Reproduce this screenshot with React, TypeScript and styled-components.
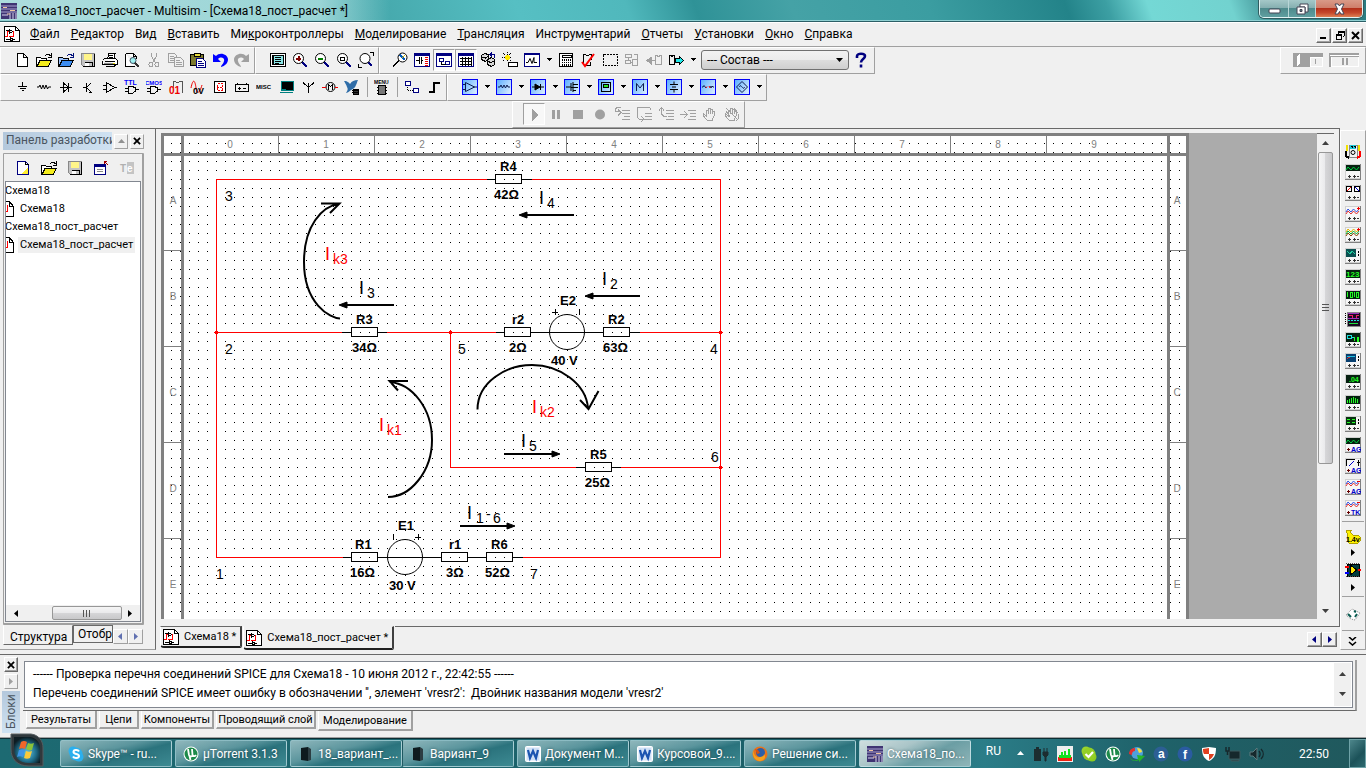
import React from "react";
import styled, { createGlobalStyle, css } from "styled-components";

const Global = createGlobalStyle`
  *, *::before, *::after { box-sizing: border-box; }
  body { margin: 0; background: #f0f0f0; }
  #root { font-family: Roboto, "Open Sans", sans-serif; font-size: 12px; line-height: 16px; color: #000; }
  button, select { font: inherit; color: inherit; margin: 0; padding: 0; border: 0; background: none; }
  p, h1, h2, ul { margin: 0; padding: 0; font-size: inherit; font-weight: 400; list-style: none; }
  svg { display: block; flex: none; }
`;

const FACE = "#f0f0f0";
const LIGHT = "#ffffff";
const SHADOW = "#a0a0a0";
const DARK = "#696969";

const Screen = styled.div`
  display: flex;
  flex-direction: column;
  height: 100vh;
  background: ${FACE};
  overflow: hidden;
  white-space: nowrap;
`;

/* ---------- title bar ---------- */

const TitleBar = styled.header`
  display: flex;
  align-items: flex-start;
  flex: none;
  height: 23px;
  border-bottom: 1px solid #fff;
  box-shadow: inset 0 -1px 0 #2c5f66, inset 0 -2px 0 #8fd0d2;
  background:
    linear-gradient(90deg, rgba(200, 236, 236, 0.8) 0, rgba(190, 232, 232, 0.7) 320px, rgba(150, 215, 217, 0) 390px),
    linear-gradient(70deg, #3f9fa3 0%, #46a9ad 28%, #56bfc3 38%, #50b8bc 46%, #2f9297 51%, #45a2a6 58%, #3b9da1 68%, #238389 78%, #3c9fa3 81%, #74d8d5 84%, #72d2cf 90%, #3f8f93 93%, #2a7b80 100%);
`;

const TitleText = styled.h1`
  flex: 1;
  padding: 3px 0 0 4px;
`;

const TitleIcon = styled.span`
  padding: 3px 0 0 1px;
`;

const Caption = styled.div`
  display: flex;
  height: 18px;
  margin-right: 3px;
  border: 1px solid #e1f4f4;
  border-top: 0;
  border-radius: 0 0 5px 5px;
  overflow: hidden;
  box-shadow: 0 0 0 1px #315c60;
`;

const CaptionButton = styled.button<{ $w: number; $close?: boolean }>`
  display: grid;
  place-items: center;
  width: ${(p) => p.$w}px;
  border-right: 1px solid #b8d6d7;
  background: ${(p) =>
    p.$close
      ? "linear-gradient(#d99a88 0, #cf7f6b 45%, #b3301a 50%, #c5482b 75%, #dc8053 100%)"
      : "linear-gradient(#a5c8c8 0, #86b0b1 45%, #4e8a8c 50%, #5f9fa0 100%)"};
  &:last-child { border-right: 0; }
`;

/* ---------- menu ---------- */

const MenuBar = styled.nav`
  display: flex;
  align-items: center;
  flex: none;
  height: 24px;
  padding: 0 0 2px 4px;
  border-bottom: 1px solid ${SHADOW};
`;

const MenuItem = styled.button`
  height: 20px;
  padding: 0 6px 0 5px;
  &:first-of-type { margin-left: 4px; }
`;

const MdiButtons = styled.div`
  display: flex;
  gap: 1px;
  margin: 4px 3px 0 auto;
`;

const SmallButton = styled.button<{ $w?: number; $flat?: boolean }>`
  display: grid;
  place-items: center;
  width: ${(p) => p.$w ?? 15}px;
  height: 15px;
  background: ${FACE};
  border: 1px solid ${LIGHT};
  border-right-color: ${(p) => (p.$flat ? SHADOW : DARK)};
  border-bottom-color: ${(p) => (p.$flat ? SHADOW : DARK)};
  box-shadow: inset -1px -1px 0 ${(p) => (p.$flat ? FACE : SHADOW)};
`;

/* ---------- tool bars ---------- */

const BarRow = styled.div`
  display: flex;
  flex: none;
  height: 27px;
`;

const Band = styled.div<{ $left?: number; $right?: number }>`
  display: flex;
  align-items: center;
  height: 27px;
  padding: 0 ${(p) => p.$right ?? 1}px 2px ${(p) => p.$left ?? 10}px;
  border: 1px solid ${LIGHT};
  border-right-color: ${SHADOW};
  border-bottom-color: ${SHADOW};
`;

const Tool = styled.button<{ $pressed?: boolean }>`
  display: grid;
  place-items: center;
  width: 22px;
  height: 22px;
  ${(p) =>
    p.$pressed &&
    css`
      border: 1px solid ${SHADOW};
      border-right-color: ${LIGHT};
      border-bottom-color: ${LIGHT};
      background: #f8f8f8;
    `}
`;

const DropTool = styled.button`
  display: grid;
  place-items: center;
  width: 12px;
  height: 22px;
`;

const BarLine = styled.span`
  width: 1px;
  height: 20px;
  margin: 0 3px 0 4px;
  background: ${SHADOW};
`;

const PickerWrap = styled.label`
  position: relative;
  margin: 0 1px 0 2px;
`;

const Picker = styled.select`
  appearance: none;
  display: block;
  width: 148px;
  height: 20px;
  padding: 0 20px 0 5px;
  border: 1px solid #707070;
  border-radius: 3px;
  background: linear-gradient(#f2f2f2, #ebebeb 50%, #dddddd 50%, #cfcfcf);
`;

const PickerArrow = styled.span`
  position: absolute;
  right: 5px;
  top: 6px;
  pointer-events: none;
`;

const Push = styled.div`
  margin-left: auto;
`;

const SimRow = styled(BarRow)`
  padding-left: 512px;
`;

const SwitchButton = styled.button`
  width: 30px;
  margin-right: 6px;
`;

/* ---------- workspace ---------- */

const Workspace = styled.main`
  display: flex;
  flex: 1;
  min-height: 0;
`;

const LeftDock = styled.aside`
  display: flex;
  flex-direction: column;
  flex: none;
  width: 156px;
  padding: 3px 11px 4px 3px;
  border-top: 1px solid ${DARK};
  border-right: 1px solid ${DARK};
  border-bottom: 1px solid ${SHADOW};
`;

const DockHead = styled.div`
  display: flex;
  align-items: center;
  gap: 2px;
  height: 18px;
  margin-bottom: 3px;
`;

const DockTitle = styled.h2`
  flex: 1;
  height: 18px;
  padding-left: 3px;
  overflow: hidden;
  color: #4a5560;
  background: linear-gradient(90deg, #b4c8dc, #cfe2f2);
`;

const DockFrame = styled.section`
  display: flex;
  flex-direction: column;
  flex: 1;
  min-height: 0;
  padding: 1px;
  border: 1px solid ${SHADOW};
  border-right: 2px solid ${SHADOW};
  border-bottom: 2px solid ${SHADOW};
  border-radius: 1px;
`;

const DockTools = styled.div`
  display: flex;
  flex: none;
  height: 26px;
  padding-left: 5px;
`;

const DockTool = styled(Tool)`
  width: 26px;
  height: 26px;
`;

const TreeBox = styled.div`
  display: flex;
  flex-direction: column;
  flex: 1;
  min-height: 0;
  border: 1px solid #828790;
  background: #fff;
`;

const Tree = styled.ul`
  flex: 1;
  overflow: hidden;
  font-size: 11px;
`;

const TreeItem = styled.li<{ $leaf?: boolean; $on?: boolean }>`
  display: flex;
  align-items: center;
  height: 18px;
  margin-left: ${(p) => (p.$leaf ? 0 : -3)}px;
  span { padding: 0 2px; margin-left: ${(p) => (p.$leaf ? 3 : 0)}px; background: ${(p) => (p.$on ? "#f0f0f0" : "none")}; }
`;

const HScroll = styled.div`
  display: flex;
  align-items: center;
  justify-content: space-between;
  flex: none;
  height: 16px;
  padding: 0 6px;
  background: #f0f0f0;
`;

const HThumb = styled.span`
  display: grid;
  place-items: center;
  width: 70px;
  height: 14px;
  margin-left: 28px;
  border: 1px solid #979797;
  border-radius: 2px;
  background: linear-gradient(#f5f5f5, #e9e9eb 50%, #d6d6d8 50%, #c8c8ca);
`;

const DockTabs = styled.div`
  display: flex;
  align-items: flex-start;
  flex: none;
  height: 20px;
`;

const DockTab = styled.button<{ $on?: boolean; $w: number }>`
  width: ${(p) => p.$w}px;
  height: ${(p) => (p.$on ? 20 : 18)}px;
  overflow: hidden;
  text-align: left;
  padding: ${(p) => (p.$on ? "3px 0 0 6px" : "0 0 0 4px")};
  border: 1px solid ${DARK};
  border-left-color: ${(p) => (p.$on ? LIGHT : DARK)};
  border-top-color: ${(p) => (p.$on ? FACE : DARK)};
`;

const DockNav = styled.div`
  display: flex;
  padding-top: 4px;
`;

const Mdi = styled.section`
  display: flex;
  flex-direction: column;
  flex: 1;
  min-width: 0;
`;

const MdiFrame = styled.div`
  display: flex;
  flex: 1;
  min-height: 0;
  padding: 4px 5px 7px 5px;
  border-top: 1px solid ${DARK};
  border-right: 1px solid ${DARK};
`;

const Sheet = styled.div`
  flex: 1;
  min-width: 0;
  overflow: hidden;
  background: #ababab;
`;

const VScroll = styled.div`
  display: flex;
  flex-direction: column;
  align-items: center;
  width: 17px;
  padding: 5px 1px 3px 1px;
  border-top: 1px solid ${DARK};
  background: #f0f0f0;
`;

const VThumb = styled.span`
  display: grid;
  place-items: center;
  width: 15px;
  flex: 311;
  margin-top: 4px;
  border: 1px solid #979797;
  border-radius: 2px;
  background: linear-gradient(90deg, #f5f5f5, #e9e9eb 50%, #d6d6d8 50%, #c8c8ca);
`;

const VTrack = styled.span`
  flex: 144;
`;

const SheetTabs = styled.div`
  display: flex;
  align-items: flex-start;
  flex: none;
  height: 24px;
  padding-left: 4px;
  font-size: 11px;
`;

const SheetTab = styled.button<{ $on?: boolean }>`
  display: flex;
  align-items: center;
  gap: 4px;
  height: ${(p) => (p.$on ? 24 : 22)}px;
  padding: 0 4px 0 2px;
  margin-right: 1px;
  border-right: 2px solid #404040;
  border-bottom: 2px solid #202020;
  border-left: 1px solid #fff;
  border-top: 1px solid ${(p) => (p.$on ? FACE : DARK)};
  border-radius: 0 0 2px 4px;
`;

const SheetNav = styled.div`
  display: flex;
  flex: 1;
  justify-content: flex-end;
  height: 24px;
  padding: 5px 3px 0 0;
  border-top: 1px solid ${DARK};
`;

const Instruments = styled.aside`
  display: flex;
  flex-direction: column;
  align-items: center;
  flex: none;
  width: 26px;
  margin-top: 2px;
  padding: 10px 1px 0 0;
  border: 1px solid ${LIGHT};
  border-right-color: ${SHADOW};
  border-bottom-color: ${SHADOW};
`;

const Instrument = styled.button<{ $h?: number }>`
  display: grid;
  place-items: center;
  width: 22px;
  height: ${(p) => p.$h ?? 21}px;
`;

const InstLine = styled.span`
  width: 22px;
  height: 1px;
  margin: 3px 0 4px;
  background: ${SHADOW};
`;

/* ---------- message spreadsheet ---------- */

const Output = styled.section`
  display: flex;
  flex: none;
  height: 84px;
  margin-top: 4px;
  border-top: 1px solid ${DARK};
  border-bottom: 1px solid ${SHADOW};
`;

const OutSide = styled.div`
  display: flex;
  flex-direction: column;
  align-items: center;
  gap: 2px;
  width: 23px;
  padding: 2px 2px 0 0;
`;

const SideLabel = styled.h2`
  width: 18px;
  height: 42px;
  writing-mode: vertical-rl;
  transform: rotate(180deg);
  text-align: center;
  line-height: 18px;
  color: #4a5560;
  background: linear-gradient(#cfe2f2, #b4c8dc);
`;

const OutBody = styled.div`
  flex: 1;
  min-width: 0;
  padding: 5px 9px 0 0;
`;

const OutFrame = styled.div`
  padding: 1px 2px 2px 1px;
  border-right: 2px solid ${SHADOW};
  border-bottom: 1px solid ${DARK};
`;

const OutText = styled.div`
  display: flex;
  height: 47px;
  border: 1px solid #828790;
  background: #fff;
`;

const Lines = styled.div`
  flex: 1;
  padding: 3px 0 0 8px;
  line-height: 19px;
  white-space: pre;
`;

const OutScroll = styled.div`
  display: flex;
  flex-direction: column;
  justify-content: space-between;
  align-items: center;
  width: 17px;
  margin: 1px;
  padding: 7px 0;
  background: #f0f0f0;
`;

const OutTabs = styled.div`
  display: flex;
  align-items: flex-start;
  gap: 2px;
  padding-left: 3px;
  font-size: 11px;
`;

const OutTab = styled.button<{ $on?: boolean; $w: number }>`
  width: ${(p) => p.$w}px;
  height: ${(p) => (p.$on ? 20 : 18)}px;
  overflow: hidden;
  border-right: 2px solid ${SHADOW};
  border-bottom: 2px solid ${SHADOW};
  border-left: 1px solid ${LIGHT};
  padding-top: 1px;
`;

/* ---------- task bar ---------- */

const TaskBar = styled.footer`
  display: flex;
  flex: none;
  align-items: stretch;
  height: 30px;
  padding-left: 9px;
  border-top: 1px solid #0c2d33;
  color: #fff;
  background: linear-gradient(90deg, #1d6a72 0, #1c5f68 60%, #2b7d88 72%, #1f626a 84%, #20585c 100%);
`;

const StartButton = styled.button`
  align-self: flex-end;
  width: 36px;
  height: 35px;
  margin-right: 15px;
`;

const TaskGroup = styled.div`
  display: flex;
  margin: 1px 3px 1px 0;
`;

const Task = styled.button<{ $on?: boolean }>`
  display: flex;
  align-items: center;
  gap: 4px;
  width: 112px;
  padding-left: 7px;
  text-align: left;
  border: 1px solid rgba(190, 225, 230, 0.65);
  border-radius: 2px;
  text-shadow: 0 0 3px rgba(0, 30, 40, 0.6);
  background: ${(p) =>
    p.$on
      ? "linear-gradient(155deg, #cfdedf 0, #aac5c8 35%, #6b9ea4 60%, #8fb5b8 100%)"
      : "linear-gradient(165deg, #8fb7bc 0, #5b959d 40%, #2b737d 58%, #3d8a92 100%)"};
  & + & { border-left-color: rgba(10, 50, 60, 0.5); }
`;

const Tray = styled.div`
  display: flex;
  align-items: center;
  gap: 8px;
  margin-left: auto;
`;

const Lang = styled.span`
  padding-bottom: 5px;
  margin-right: 7px;
`;

const Clock = styled.time`
  width: 76px;
  padding-left: 26px;
`;

const ShowDesktop = styled.button`
  width: 17px;
  border: 1px solid #6fa3a8;
  background: linear-gradient(135deg, #4d868b, #1c5259 60%, #2d6a70);
`;

/* ---------- icon drawings ---------- */

const Pix = ({ children, w = 16, h = 16, smooth }: { children: React.ReactNode; w?: number; h?: number; smooth?: boolean }) => (
  <svg
    width={w}
    height={h}
    viewBox={`0 0 ${w} ${h}`}
    fill="none"
    stroke="#000"
    shapeRendering={smooth ? "auto" : "crispEdges"}
    aria-hidden="true"
  >
    {children}
  </svg>
);

const Tri = ({ dir = "down", color = "#000" }: { dir?: "down" | "up" | "left" | "right"; color?: string }) => {
  const d = { down: "M1 2h7L4.500 6z", up: "M1 6h7L4.500 2z", left: "M6 1v7L2 4.500z", right: "M3 1v7L7 4.500z" }[dir];
  return (
    <svg width="9" height="9" viewBox="0 0 9 9" aria-hidden="true">
      <path d={d} fill={color} />
    </svg>
  );
};

const SmallDrop = () => (
  <svg width="5" height="3" viewBox="0 0 5 3" shapeRendering="crispEdges" aria-hidden="true">
    <path d="M0 0h5v1H4v1H3v1H2V2H1V1H0z" fill="#000" />
  </svg>
);

const glyph = { fontFamily: "Liberation Sans, sans-serif", fontWeight: 700, stroke: "none" } as const;

const Lens = ({ inner }: { inner?: React.ReactNode }) => (
  <>
    <path d="M10 10l5 5" stroke="#000080" strokeWidth="2" />
    <circle cx="6.500" cy="6.500" r="5" fill="#fff" shapeRendering="auto" />
    {inner}
  </>
);

const FolderOpen = ({ a, b, arrow = "#000" }: { a: string; b: string; arrow?: string }) => (
  <>
    <path d="M.5 14V5.500h4l1 1h5v2.500" fill={a} />
    <path d="M1 14.500L4 8.500h11.500L12 14.500z" fill={b} />
    <path d="M8.500 4.500l2-2h3l1 2M15.500 1v4h-4" stroke={arrow} />
  </>
);

const DocSchem = () => (
  <Pix w={17}>
    <path d="M.5 .5h11l4 4v11H.5z" fill="#fff" />
    <path d="M11.500 .5v4h4" />
    <path d="M1 10.500h2.500V5.500h2M8 5.500h1.500v5M5 10.500h5" stroke="#f00" />
    <path d="M5.500 3.500v4l3-2zM2 4.500h3M2 13.500h4M6.500 12v3l3-1.500z" fill="#fff" />
  </Pix>
);

const LeafDoc = () => (
  <Pix w={9}>
    <path d="M0 .5h3.500l4 5v10H0" fill="#fff" />
    <path d="M3.500 .5v5h4" />
    <path d="M1.500 4v7M0 10.500h1" stroke="#f00" />
  </Pix>
);

const NiMark = () => (
  <svg width="16" height="16" viewBox="0 0 16 16" aria-hidden="true">
    <rect width="16" height="16" fill="#3f3472" />
    <path d="M0 3h16M0 6h16M0 9h16" stroke="#a9a1cf" />
    <path d="M1 12h6M9 10v6M12 10v6M15 10v6" stroke="#d9d4ee" />
    <path d="M2 4.500h4M9 7.500h5M6 11h3" stroke="#f0c6a0" />
  </svg>
);

const icons: Record<string, React.ReactNode> = {
  new: <path d="M3.500 1.500h6l4 4v9h-10zM9.500 1.500v4h4" fill="#fff" />,
  open: <FolderOpen a="#fff" b="#f4ec1c" />,
  openBlue: <FolderOpen a="#9ec4ff" b="#3c8cf0" arrow="#00107a" />,
  save: (
    <>
      <path d="M1.500 1.500h13v13h-11l-2-2z" fill="#c4c4c4" stroke="#888" />
      <path d="M4 2h8v6H4z" fill="#fff58a" stroke="none" />
      <path d="M14.500 2v12.500H3M5 14v-4h7v4" />
      <path d="M5 11h4v3H5z" fill="#fff" stroke="none" />
    </>
  ),
  print: (
    <>
      <path d="M5.500 6.500l1.500-5h6l-1 5M2.500 6.500h11l2 2v4h-3M.5 8.500v4h2M.5 8.500l2-2" fill="#fff" />
      <path d="M3 12.500h10M3 9.500h10M3.500 14.500h9l1-2M7 3.500h4M6.500 5h4" />
      <path d="M2 11h9" stroke="#888" />
      <path d="M11 11h2" stroke="#e8d800" />
    </>
  ),
  preview: (
    <>
      <path d="M1.500 1.500h8l3 3v2M1.500 1.500v13h9M9.500 1.500v3h3" fill="#fff" />
      <circle cx="9" cy="8.500" r="3" fill="#9ff1f1" stroke="#456" shapeRendering="auto" />
      <path d="M11 11l4 4" stroke="#333" strokeWidth="2" />
    </>
  ),
  cut: (
    <g stroke="#a0a0a0">
      <path d="M5.500 1v3l4 7M10.500 1v3l-4 7" />
      <circle cx="5" cy="12.500" r="2" />
      <circle cx="11" cy="12.500" r="2" />
    </g>
  ),
  copy: (
    <g stroke="#a0a0a0">
      <path d="M.5 1.500h6l2 2v7h-8zM2 4.500h4M2 6.500h4M2 8.500h4" />
      <path d="M6.500 5.500h6l3 3v6h-9zM8 8.500h4M8 10.500h6M8 12.500h6" fill={FACE} />
    </g>
  ),
  paste: (
    <>
      <path d="M.5 2.500h13v11H.5z" fill="#7d7a2e" />
      <path d="M4 1h6v3H4z" fill="#e8dc3c" />
      <path d="M6.500 6.500h6l3 3v6h-9z" fill="#fff" stroke="#000080" />
      <path d="M8 9.500h4M8 11.500h6M8 13.500h6" stroke="#000080" />
    </>
  ),
  undo: (
    <path d="M1 2v8h8l-3-3c3-3 7-1 6 2c-.5 3-3 4-3 6c4-1 7-4 7-7.500c0-5-8-8-12-3.500z" fill="#0000ff" stroke="none" shapeRendering="auto" />
  ),
  redo: (
    <path d="M15 2v8H7l3-3c-3-3-7-1-6 2c.5 3 3 4 3 6c-4-1-7-4-7-7.500c0-5 8-8 12-3.500z" fill="#a0a0a0" stroke="none" shapeRendering="auto" />
  ),
  sheet: (
    <>
      <path d="M.5 1.500h15v13H.5z" fill="#fff" />
      <path d="M3.500 3.500h10v9h-10z" fill="#8be5e5" />
      <path d="M5 5.500h6M5 7.500h6M5 9.500h6M5 11.500h4M2 3v10" />
    </>
  ),
  zoomIn: <Lens inner={<path d="M4 6.500h5M6.500 4v5" stroke="#800000" strokeWidth="2" />} />,
  zoomOut: <Lens inner={<path d="M4 6.500h5" stroke="#008000" strokeWidth="2" />} />,
  zoomArea: <Lens inner={<path d="M4.500 5h4v3.500h-4z" />} />,
  zoomFit: (
    <>
      <path d="M10 10l3.500 4" stroke="#000080" strokeWidth="2" />
      <circle cx="7" cy="6.500" r="5" fill="#fff" shapeRendering="auto" />
      <path d="M12 .5h3.500V4M.5 12v3.500H4" />
    </>
  ),
  find: (
    <>
      <path d="M1 14.500l6-6" strokeWidth="2" />
      <circle cx="10.500" cy="5.500" r="4.500" fill="#fff" shapeRendering="auto" />
      <path d="M8 3l5 5" stroke="#0057b8" strokeWidth="2" />
      <path d="M10 6l3-3" stroke="#e0c000" />
    </>
  ),
  panel: (
    <>
      <path d="M.5 1.500h15v13H.5z" fill="#fff" stroke="#000080" />
      <path d="M1 3h14" stroke="#000080" strokeWidth="2" />
      <path d="M2 8.500h3M7 8.500h2M5.500 5v7M7.500 5v7" />
      <path d="M12 5v9" stroke="#e00" strokeWidth="3" strokeDasharray="1 1" />
    </>
  ),
  tree: (
    <>
      <path d="M.5 1.500h15v13H.5z" fill="#fff" stroke="#000080" />
      <path d="M1 3h15" stroke="#000080" strokeWidth="2" />
      <path d="M3.500 6.500h4v3h-4zM9.500 9.500h4v3h-4z" stroke="#000080" />
      <path d="M5.500 10v2.500h4" />
    </>
  ),
  grid: (
    <>
      <path d="M.5 1.500h15v13H.5z" fill="#fff" stroke="#000080" />
      <path d="M1 3h15" stroke="#000080" strokeWidth="2" />
      <path d="M2 6.500h12M2 9.500h12M2 12.500h12M4.500 5v9M7.500 5v9M10.500 5v9M13.500 5v9" />
    </>
  ),
  db: (
    <>
      <path d="M1.500 3.500l3-2 4 1v5l-3 2-4-2zM7.500 7.500l4-2 3 2v5l-3 2-4-2zM1.500 5l4 1 3-2" fill="#d8d8d8" />
      <path d="M7.500 9.500l4 1 3-2" />
      <path d="M10.500 2.500h4v3M12 .5l-2 2 2 2" stroke="#000080" />
    </>
  ),
  wizard: (
    <>
      <path d="M1 1l8 8M9 1L1 9M5.500 0v10M0 5.500h10" stroke="#000" strokeDasharray="1 1" />
      <path d="M3 5.500h5M5.500 3v5" stroke="#ffe800" strokeWidth="3" />
      <path d="M6.500 10.500h9v4h-9z" fill="#fff" />
    </>
  ),
  graph: (
    <>
      <path d="M.5 1.500h15v13H.5z" fill="#fff" stroke="#000080" />
      <path d="M1 2.500h14" stroke="#000080" />
      <path d="M2 10.500h2l2-4 2 5 2-6v5h3" shapeRendering="auto" />
    </>
  ),
  calc: (
    <>
      <path d="M1.500 1.500h13v13h-13zM4 3.500h9v2H4z" fill="#fff" />
      <path d="M4 8h9M4 10.500h9M4 13h9" strokeWidth="1.500" strokeDasharray="1 1" />
    </>
  ),
  check: (
    <>
      <path d="M3.500 11V2.500h2l1 1h2l1-1h2V8M5 13.500h5.500V10" />
      <path d="M2 10l3 4L14 2" stroke="#f00" strokeWidth="2" shapeRendering="auto" />
    </>
  ),
  marquee: <path d="M1.500 2.500h14v11h-14z" strokeDasharray="2 1" />,
  linkGray: (
    <g stroke="#a0a0a0">
      <path d="M1.500 2.500h6v3h-6zM1.500 8.500h5v3h-5zM9.500 2.500h4v4M8.500 7.500h5v6h-5zM4 6v2M7 10h1" />
    </g>
  ),
  backGray: (
    <g stroke="#a0a0a0">
      <path d="M1 8.500l4-3v6zM5 8.500h4" fill="#a0a0a0" />
      <path d="M9.500 12.500V3.500h2l.5 1h1l.5-1h2v9z" />
    </g>
  ),
  forward: (
    <>
      <path d="M1.500 12.500V3.500h2v1h1v-1h2v9zM7 8.500h2" />
      <path d="M7.500 6.500h4v-2l4 4-4 4v-2h-4z" fill="#20e8e8" />
    </>
  ),
  ground: <path d="M8.500 3v4M4 7.500h9M5.500 9.500h6M7.500 11.500h2" />,
  resistor: <path d="M1 8h2l1-2 1.500 4 1.500-4 1.500 4L10 6l1.500 4 1-2H15" shapeRendering="auto" />,
  diode: <path d="M2 8.500h12M5.500 4v9l5-4.500zM10.500 4v9" />,
  npn: <path d="M6.500 4v9M3 8.500h3M7 8l4-4M7 9l4 4M9 13h3" />,
  opamp: <path d="M4.500 3.500v10l8-5zM1 6.500h3M1 10.500h3M12 8.500h3" />,
  ttl: (
    <>
      <path d="M4.500 7.500h4l3 1.500v3l-3 2.500h-4zM1 9.500h3M1 12.500h3M12 10.500h3" />
      <text x="0" y="6" fontSize="7" fill="#00f" {...glyph}>TTL</text>
    </>
  ),
  cmos: (
    <>
      <path d="M4.500 7.500h4l3 1.500v3l-3 2.500h-4zM1 9.500h3M1 12.500h3M12 10.500h3" />
      <text x="-1" y="6" fontSize="6" fill="#00f" {...glyph}>CMOS</text>
    </>
  ),
  digital: (
    <>
      <path d="M5.500 9V2.500h2l1 1h2l1-1h2.500v11" stroke="#555" />
      <text x="1" y="15" fontSize="10" fill="#e00" {...glyph}>01</text>
    </>
  ),
  mixed: (
    <>
      <path d="M1 9c2-10 4-8 5 0s4 4 6-3" stroke="#e00" shapeRendering="auto" />
      <text x="3" y="15" fontSize="9" fill="#000" {...glyph}>0V</text>
    </>
  ),
  indicator: (
    <>
      <path d="M2.500 2.500h11v11h-11z" fill="#fff" />
      <path d="M5.500 4.500h5v7h-5zM5 8h6" stroke="#e00" strokeDasharray="2 1" />
    </>
  ),
  power: <path d="M1.500 5.500h13v7h-13zM3.500 3.500v2M12.500 3.500v2M4 9h3M5.500 7.500v3M9 9h3" />,
  misc: <text x="0" y="10" fontSize="6" fill="#000" {...glyph}>MISC</text>,
  periph: (
    <>
      <path d="M3 2.500h12v9H3z" fill="#000" stroke="#008080" />
      <path d="M2 13.500h13M4 10.500h4" stroke="#008080" />
    </>
  ),
  rf: <path d="M8.500 4v10M3 3.500l5.500 5M14 3.500l-5.500 5" />,
  motor: (
    <>
      <circle cx="8.500" cy="8" r="4.500" shapeRendering="auto" />
      <path d="M6.500 10.500v-5l2 2 2-2v5" />
      <path d="M0 8.500h4M13 8.500h3" stroke="#e00" />
    </>
  ),
  ni: (
    <>
      <path d="M0 2c4 0 5 2 6 3 2-3 4-4 8-4-1 2-1 3-2 5-1 3-3 4-5 5-2 2-4 3-5 3 2-3 2-4 1-6C2 5 1 4 0 2z" fill="#2f6da8" stroke="none" shapeRendering="auto" />
      <path d="M9 10h5v5H9zM8 11.500h7M8 13.500h7" fill="#333" />
    </>
  ),
  mcu: (
    <>
      <text x="0" y="5" fontSize="5" fill="#000" {...glyph}>MENU</text>
      <path d="M4.500 6.500h7v9h-7z" fill="#777" />
      <path d="M3 8.500h10M3 11.500h10M3 14.500h10" strokeDasharray="2 6" />
    </>
  ),
  hier: (
    <>
      <path d="M1.500 2.500h5v4h-5zM9.500 9.500h5v4h-5z" fill="#fff" stroke="#000080" />
      <path d="M3.500 8v3.500h5" strokeDasharray="1 1" />
    </>
  ),
  bus: <path d="M3 13h5V4h6" strokeWidth="2" />,
  play: <path d="M6 3l7 6-7 6z" fill="#a0a0a0" stroke="none" />,
  pause: <path d="M4 4h3v9H4zM9 4h3v9H9z" fill="#a0a0a0" stroke="none" />,
  stop: <path d="M3 4h10v9H3z" fill="#a0a0a0" stroke="none" />,
  rec: <circle cx="8" cy="8.500" r="5" fill="#a0a0a0" stroke="none" shapeRendering="auto" />,
  stepIn: <path d="M8 4.500h8M8 7.500h8M10 10.500h6M8 13.500h8M7 1.500H3l-2 2v2h5M4 3.500l3 3-3 3" stroke="#a0a0a0" />,
  stepOver: <path d="M9 7.500h7M9 10.500h7M8 13.500h8M14 4V2l-1-1H2L1 3v8l2 2h4M5 10l3 3-3 3" stroke="#a0a0a0" />,
  stepOut: <path d="M8 4.500h8M8 7.500h8M10 10.500h6M8 13.500h8M1 4.500l2.500-3 2.500 3M3.500 2v6l2 2h3" stroke="#a0a0a0" />,
  runTo: <path d="M8 4.500h8M10 7.500h6M10 10.500h6M8 13.500h8M0 8.500h7M4 5l3.500 3.500L4 12" stroke="#a0a0a0" />,
  hand: <path d="M5 14l-3.500-4v-2l2.500 2V4.500h2V8 2.500h2V8 3.500h2V8 5.500h2V10l-2 4.500z" stroke="#a0a0a0" />,
  hand2: <path d="M5 14l-3.500-4v-2l2.500 2V4.500h2V8 2.500h2V8 3.500h2V8 5.500h2V10l-2 4.500zM2 2l12 12M14 8l1 4-3 3M2 5l4 6M10 2l4 5" stroke="#a0a0a0" />,
  docYellow: (
    <>
      <path d="M2.500 1.500h8l3 3v10h-11z" fill="#fff" stroke="#000080" />
      <path d="M6 14L13 7v7z" fill="#ffee30" stroke="none" />
      <path d="M10.500 1.500v3h3" />
    </>
  ),
  rename: (
    <>
      <path d="M1.500 4.500h11v10h-11z" fill="#fff" stroke="#000080" />
      <path d="M1 6h12" stroke="#000080" strokeWidth="2" />
      <path d="M4 9.500h6M4 11.500h6" stroke="#888" />
      <path d="M15 5l-4-4M11 4V1h3" stroke="#a00000" />
    </>
  ),
  text: (
    <>
      <path d="M8 2h7v12H8z" fill="#c4c4c4" stroke="none" />
      <text x="1" y="12" fontSize="10" fill="#b0b0b0" {...glyph}>T</text>
      <text x="8" y="12" fontSize="10" fill="#fff" {...glyph}>e</text>
    </>
  ),
};

const Ico = ({ n }: { n: string }) => <Pix>{icons[n]}</Pix>;

const BlueBox = ({ children }: { children: React.ReactNode }) => (
  <svg width="16" height="16" viewBox="0 0 16 16" fill="none" stroke="#0c1c50" aria-hidden="true">
    <defs>
      <linearGradient id="blueface" x1="0" y1="0" x2="1" y2="0.600">
        <stop offset="0" stopColor="#58acff" />
        <stop offset="1" stopColor="#d0e8ff" />
      </linearGradient>
    </defs>
    <rect x="0.500" y="0.500" width="15" height="15" fill="url(#blueface)" stroke="#0000f8" />
    {children}
  </svg>
);

const blueIcons: [string, React.ReactNode][] = [
  ["Аналоговые", <path key="a" d="M3.500 3.500v9l9-4.500zM1 5.500h2M1 10.500h2M12 8h3" />],
  ["Пассивные", <path key="b" d="M2 8h2l1-2 1.500 3L8 6l1.500 3L11 6l1 2h2" />],
  ["Диоды", <path key="c" d="M2 8h12M5 5v6l5-3zM10.500 5v6" fill="#000" stroke="#000" />],
  ["Транзисторы", <path key="d" d="M7 4v8M2 8h5M9 3v10M9 5.500h5M7 8.500h7M9 11.500h3" stroke="#000" />],
  ["Измерительные", <g key="e"><rect x="3.500" y="3.500" width="9" height="9" stroke="#000" /><rect x="5.500" y="5.500" width="5" height="3" fill="#28e828" stroke="#000" /></g>],
  ["Разные", <path key="f" d="M4.500 12V4.500L8 9l3.500-4.500V12" />],
  ["Источники питания", <path key="g" d="M8 2.500v3M4 5.500h8M6 8h4M4 10.500h8M8 10.500v3" stroke="#000" />],
  ["Номинальные", <g key="h"><path d="M2 8h1l1-1.500L6 9M10 7l1 2 1-2 1 1h1" /><path d="M6 9l1-1.500M9 7l1 2" stroke="#f00" /></g>],
  ["Источники сигнала", <path key="i" d="M8 2.500L13.500 8 8 13.500 2.500 8zM5.500 8c1-3 2 0 2.500 0s1.500 3 2.500 0" />],
];

const InstPanel = ({ children, label }: { children?: React.ReactNode; label?: string }) => (
  <Pix>
    <path d="M.5 .5h15v14H.5z" fill="#f6f6f6" stroke="#d0d0d0" />
    <path d="M0 15.500h15.500V0" stroke="#808080" />
    {children}
    {label ? (
      <>
        <path d="M2 12.500h3M3.500 11v3" stroke="#600" />
        <text x="6" y="15" fontSize="7" fill="#00c" {...glyph}>{label}</text>
      </>
    ) : (
      <path d="M3 12.500h3M4.500 11v3M8 12.500h3M9.500 11v3M12 12.500h2" stroke="#333" />
    )}
  </Pix>
);

const black = (h = 7) => <path d={`M1 1h14v${h}H1z`} fill="#062010" stroke="none" />;
const zig = (y: number, c: string) => <path d={`M1 ${y}l2-3 3 3 2.500-3 3 3 2.500-3`} stroke={c} shapeRendering="auto" />;

const instruments: [string, React.ReactNode][] = [
  ["Мультиметр", (
    <Pix key="1">
      <path d="M4 2h8v12H4z" fill="#f4f4f4" stroke="#888" />
      <path d="M5 2h6v4H5z" fill="#20c8d8" stroke="none" />
      <path d="M6 3h1v2M9 3h1v2" />
      <circle cx="8" cy="9.500" r="2" shapeRendering="auto" />
      <path d="M2 2v6M14 2v6" stroke="#f0e000" strokeWidth="2" />
      <path d="M1 8v5l3 2" strokeWidth="2" />
      <path d="M15 8v5l-3 2" stroke="#f00" strokeWidth="2" />
    </Pix>
  )],
  ["Генератор сигналов", <InstPanel key="2">{black(6)}{zig(6, "#00d040")}</InstPanel>],
  ["Ваттметр", <InstPanel key="3"><path d="M1.500 1.500h5v5h-5zM9.500 1.500h5v5h-5z" fill="#fff" /><path d="M2 6l4-4" stroke="#e00" /><path d="M10 2l4 4" stroke="#00c" /></InstPanel>],
  ["Осциллограф", <InstPanel key="4">{zig(6, "#3050e0")}{zig(8, "#e03030")}<path d="M12 2.500h3M13.500 1v3" stroke="#e00" /></InstPanel>],
  ["Четырёхканальный осциллограф", <InstPanel key="5">{zig(5, "#e0b000")}{zig(7, "#00b030")}{zig(9, "#804000")}<path d="M12 2.500h3M13.500 1v3" stroke="#e00" /></InstPanel>],
  ["Плоттер Боде", <InstPanel key="6"><path d="M1 1h10v8H1z" fill="#0a5050" stroke="none" /><path d="M2 3l3 3 2-3 3 3" stroke="#20d0a0" /><path d="M13.500 3v5" strokeDasharray="2 1" /></InstPanel>],
  ["Частотомер", <InstPanel key="7">{black(8)}<text x="1" y="8" fontSize="8" fill="#2f2" {...glyph}>123</text></InstPanel>],
  ["Генератор слов", <InstPanel key="8">{black(8)}<path d="M2.500 2v5M5.500 2.500h2v5h-2zM9.500 2v5M11.500 2.500h2v5h-2z" stroke="#2f2" /></InstPanel>],
  ["Логический анализатор", <Pix key="9"><path d="M2 1h13v14H2z" fill="#180820" stroke="#888" /><path d="M4 4h3v3h4V4h3" stroke="#f02060" /><path d="M4 12h9" stroke="#20e040" /><path d="M3 9h11" stroke="#20e0e0" strokeDasharray="2 1" /><path d="M3 2.500h11M3 7.500h11" stroke="#a030c0" /><path d="M.5 2v12" strokeDasharray="1 1" /></Pix>],
  ["Логический преобразователь", <InstPanel key="10">{black(9)}<path d="M2 3h4v3H2zM6 5h4" stroke="#20e0e0" /><path d="M9.500 5v4M12 5h1.500v4H12z" stroke="#2f2" /></InstPanel>],
  ["Вольтамперограф", <InstPanel key="11"><path d="M1 1h10v8H1z" fill="#084070" stroke="none" /><path d="M2 6l4-3 4 1" stroke="#e03030" /><path d="M2 3h8" stroke="#20c0e0" /><path d="M13.500 3v5" strokeDasharray="2 1" /></InstPanel>],
  ["Измеритель искажений", <InstPanel key="12">{black(8)}<text x="4" y="8" fontSize="7" fill="#2f2" {...glyph}>.04</text></InstPanel>],
  ["Анализатор спектра", <InstPanel key="13">{black(8)}<path d="M2.500 8v-3M4.500 8V4M6.500 8V3M8.500 8V2M10.500 8V3M12.500 8V4" stroke="#2f2" /></InstPanel>],
  ["Анализатор сети", <InstPanel key="14"><path d="M1 1h10v8H1z" fill="#083010" stroke="none" /><path d="M2 3h8M2 6h8" stroke="#2f2" strokeDasharray="3 2" /><path d="M13.500 3v5" strokeDasharray="2 1" /></InstPanel>],
  ["Генератор Agilent", <InstPanel key="15" label="AG">{black(6)}{zig(6, "#00d040")}</InstPanel>],
  ["Мультиметр Agilent", <InstPanel key="16" label="AG"><path d="M1.500 8V1.500H10" /><path d="M4 8l5-5" stroke="#00c" /><path d="M13.500 2v6M12 4.500h3" /></InstPanel>],
  ["Осциллограф Agilent", <InstPanel key="17" label="AG">{zig(5, "#3050e0")}{zig(7, "#e03030")}<path d="M12 2.500h3" stroke="#e00" /></InstPanel>],
  ["Осциллограф Tektronix", <InstPanel key="18" label="TK">{zig(5, "#3050e0")}{zig(7, "#e03030")}<path d="M12 2.500h3" stroke="#e00" /></InstPanel>],
];

/* ---------- circuit drawing ---------- */

const INK = "#000";
const WIRE = "#ff0000";
const sans = "Liberation Sans, Arial, sans-serif";

const Part = ({ x, y, name, value, nx, vx }: { x: number; y: number; name: string; value: string; nx: number; vx: number }) => (
  <g>
    <rect x={x + 0.5} y={y - 4.5} width="26" height="9" fill="#fff" stroke={INK} />
    <path d={`M${x + 9} ${y}h1M${x + 18} ${y}h1`} stroke={INK} />
    <text x={nx} y={y - 8} fontSize="13" fontWeight="700">{name}</text>
    <text x={vx} y={y + 20} fontSize="13" fontWeight="700">{value}</text>
  </g>
);

const Source = ({ x, y, name, value, plusLeft }: { x: number; y: number; name: string; value: string; plusLeft?: boolean }) => {
  const p = plusLeft ? x - 12 : x + 13;
  const m = plusLeft ? x + 12.5 : x - 11.500;
  return (
    <g>
      <circle cx={x} cy={y} r="17.500" fill="none" stroke={INK} shapeRendering="auto" />
      <path d={`M${p - 3} ${y - 20}h6M${p} ${y - 23}v6M${m} ${y - 23}v6`} stroke={INK} />
      <text x={x - 7} y={y - 27} fontSize="13" fontWeight="700">{name}</text>
      <text x={x - 16} y={y + 33} fontSize="13" fontWeight="700">{value}</text>
    </g>
  );
};

const Current = ({ x, y, sub, red }: { x: number; y: number; sub: string; red?: boolean }) => (
  <g fill={red ? WIRE : INK}>
    <text x={x} y={y} fontSize="18">I</text>
    <text x={x + 8} y={y + 4} fontSize="14">{sub}</text>
  </g>
);

const Arrow = ({ tail, tip, y }: { tail: number; tip: number; y: number }) => {
  const s = tip > tail ? -8 : 8;
  return (
    <g>
      <path d={`M${tail} ${y}H${tip + s}`} stroke={INK} strokeWidth="2" />
      <path d={`M${tip} ${y}l${s} -3v6z`} fill={INK} stroke={INK} shapeRendering="auto" />
    </g>
  );
};

const cols = [0, 1, 2, 3, 4, 5, 6, 7, 8, 9];
const rows = ["A", "B", "C", "D", "E"];
const nodes: [string, number, number][] = [
  ["3", 225, 201], ["2", 225, 354], ["5", 458, 354], ["4", 710, 354], ["6", 711, 462], ["1", 216, 579], ["7", 530, 579],
];

const Circuit = () => (
  <svg width="1028" height="720" viewBox="161 133 1028 720" fontFamily={sans} shapeRendering="crispEdges" role="img" aria-label="Схема18_пост_расчет">
    <defs>
      <pattern id="dots" x="0" y="8" width="9" height="9" patternUnits="userSpaceOnUse">
        <rect width="1" height="1" fill="#000" />
      </pattern>
    </defs>
    <rect x="161" y="133" width="1028" height="720" fill="#fff" />
    <rect x="164" y="136" width="1022" height="717" fill="url(#dots)" />
    <g fill="#808080">
      <rect x="161" y="133" width="1028" height="3" />
      <rect x="161" y="133" width="3" height="720" />
      <rect x="1186" y="133" width="3" height="720" />
      <rect x="164" y="153" width="1022" height="3" />
      <rect x="181" y="136" width="3" height="717" />
      <rect x="1167" y="136" width="3" height="717" />
    </g>
    <g fontSize="10" fill="#808080" textAnchor="middle">
      {cols.map((c) => (
        <g key={c}>
          <rect x={226 + c * 96} y="140" width="9" height="9" fill="#fff" />
          <text x={230 + c * 96} y="148">{c}</text>
          {c < 9 && <rect x={278 + c * 96} y="136" width="1" height="17" />}
        </g>
      ))}
      {rows.map((r, i) => (
        <g key={r}>
          <text x="173" y={204 + i * 96}>{r}</text>
          <text x="1177" y={204 + i * 96}>{r}</text>
          <rect x="164" y={250 + i * 96} width="17" height="1" />
          <rect x="1170" y={250 + i * 96} width="16" height="1" />
        </g>
      ))}
    </g>

    <g fill="none" stroke={WIRE}>
      <path d="M216.500 179.500H720.500V557.500H216.500zM216 332.500H720M450.500 332V467.500H720" />
    </g>
    <g stroke={INK} fill="none">
      <path d="M487 179.500h45M342 332.500h45M496 332.500h144M576 467.500h45M343 557.500h180" />
    </g>
    <g fill={WIRE}>
      {[[216, 332], [450, 332], [720, 332], [720, 467]].map(([x, y]) => (
        <path key={`${x}-${y}`} d={`M${x - 1} ${y - 1}h3v3h-3zM${x} ${y - 2}h1v5h-1zM${x - 2} ${y}h5v1h-5z`} />
      ))}
    </g>

    <Part x={495} y={179} name="R4" value="42Ω" nx={500} vx={494} />
    <Part x={351} y={332} name="R3" value="34Ω" nx={356} vx={352} />
    <Part x={504} y={332} name="r2" value="2Ω" nx={512} vx={509} />
    <Part x={603} y={332} name="R2" value="63Ω" nx={608} vx={603} />
    <Part x={585} y={467} name="R5" value="25Ω" nx={590} vx={585} />
    <Part x={351} y={557} name="R1" value="16Ω" nx={355} vx={350} />
    <Part x={441} y={557} name="r1" value="3Ω" nx={449} vx={446} />
    <Part x={486} y={557} name="R6" value="52Ω" nx={491} vx={485} />
    <Source x={567} y={332} name="E2" value="40 V" plusLeft />
    <Source x={405} y={557} name="E1" value="30 V" />

    <g fontSize="14" fill={INK}>
      {nodes.map(([n, x, y]) => (
        <text key={n} x={x} y={y}>{n}</text>
      ))}
    </g>

    <Current x={539} y={204} sub="4" />
    <Current x={359} y={294} sub="3" />
    <Current x={602} y={285} sub="2" />
    <Current x={521} y={447} sub="5" />
    <Current x={325} y={260} sub="k3" red />
    <Current x={379} y={431} sub="k1" red />
    <Current x={532} y={413} sub="k2" red />
    <g fill={INK}>
      <text x="467" y="519" fontSize="18">I</text>
      <text x="476" y="523" fontSize="14">1</text>
      <text x="486" y="519" fontSize="14">-</text>
      <text x="493" y="523" fontSize="14">6</text>
    </g>

    <Arrow tail={574} tip={519} y={215} />
    <Arrow tail={394} tip={339} y={305} />
    <Arrow tail={640} tip={585} y={296} />
    <Arrow tail={504} tip={560} y={454} />
    <Arrow tail={460} tip={515} y={526} />

    <g fill="none" stroke={INK} strokeWidth="2" shapeRendering="auto">
      <path d="M340 318.500C330 318 304 304 304 262 304 226 322 206 339 204M321 203.500h18.500L330 213" />
      <path d="M388 497C410 497 432 472 432 440 432 408 412 384 390 382M408 381H389.500L398 390.500" />
      <path d="M477.500 409.500C477.500 382 506 365 532 365 560 365 586 384 588 408M580 400l8.500 9L598.500 391" />
    </g>
  </svg>
);

/* ---------- task bar drawings ---------- */

const Round = ({ fill, children }: { fill: string; children?: React.ReactNode }) => (
  <svg width="16" height="16" viewBox="0 0 16 16" aria-hidden="true">
    <circle cx="8" cy="8" r="7.500" fill={fill} />
    {children}
  </svg>
);

const UTorrent = () => (
  <Round fill="#fff">
    <circle cx="8" cy="8" r="6.500" fill="#1d8a4a" />
    <path d="M5 3l1 6c.5 2 3.500 2 3.500 0L9 3M9.500 9c1 2 3 1 3.500 0M6.500 10l1 4" stroke="#fff" strokeWidth="1.800" fill="none" />
  </Round>
);

const Skype = () => (
  <svg width="16" height="16" viewBox="0 0 16 16" aria-hidden="true">
    <circle cx="5" cy="5" r="4.500" fill="#2bb0ee" />
    <circle cx="11" cy="11" r="4.500" fill="#2bb0ee" />
    <circle cx="8" cy="8" r="6.500" fill="#2bb0ee" />
    <path d="M11 5.500C10 3.500 5.500 3.500 5.500 6c0 2.500 5.500 1.500 5.500 4 0 2.500-5 2.500-6 .5" fill="none" stroke="#fff" strokeWidth="2" />
  </svg>
);

const BlackBook = () => (
  <svg width="16" height="16" viewBox="0 0 16 16" aria-hidden="true">
    <path d="M3 2l7-1v14l-7-1z" fill="#0e1a1e" />
    <path d="M10 1l3 2v11l-3 1z" fill="#2c3d42" />
  </svg>
);

const Word = () => (
  <svg width="16" height="16" viewBox="0 0 16 16" aria-hidden="true">
    <rect x="0.500" y="0.500" width="15" height="15" rx="1" fill="#e8f0fb" stroke="#fff" />
    <rect x="2" y="2" width="12" height="12" fill="#cfe0f6" />
    <path d="M3 4l2 8L8 5l3 7 2-8" fill="none" stroke="#1b54b0" strokeWidth="2.200" />
  </svg>
);

const Firefox = () => (
  <Round fill="#e8731a">
    <circle cx="8.500" cy="6.500" r="4.500" fill="#2c5ea8" />
    <path d="M1 4c1 6 4 8 7 7 2 0 4-1 4-3 3 4-1 7-4 7C3 15 0 10 1 4z" fill="#f5a11c" />
    <path d="M3 3l3 1 2 3-3 1z" fill="#d9510f" />
  </Round>
);

const StartOrb = () => (
  <svg width="36" height="35" viewBox="0 0 36 35" aria-hidden="true">
    <defs>
      <radialGradient id="orb" cx="0.500" cy="0.600" r="0.600">
        <stop offset="0" stopColor="#5fc6ea" />
        <stop offset="0.600" stopColor="#1d6a86" />
        <stop offset="1" stopColor="#0d1c22" />
      </radialGradient>
    </defs>
    <path d="M2 1h20c8 1 12 7 12 14v18H20C8 33 2 26 2 16z" fill="#30383c" stroke="#555c60" />
    <path d="M5 4h16c7 1 10 6 10 12v14H20C10 30 5 24 5 16z" fill="url(#orb)" />
    <path d="M12 9c3-1.500 4-1 6 0l-2 7c-2-1-4-1-6 0z" fill="#f0662a" />
    <path d="M19 10c2 1 4 1 6 0l-2 7c-2 1-4 0-6-1z" fill="#8ac33a" />
    <path d="M10 17c2-1 4-1 6 0l-2 7c-2-1-4-1-6 0z" fill="#3f95e6" />
    <path d="M17 18c2 1 4 1 6 0l-2 7c-2 1-4 1-6 0z" fill="#fbca3a" />
  </svg>
);

const tasks: [string, React.ReactNode, boolean?][][] = [
  [["Skype™ - ru...", <Skype key="s" />]],
  [["µTorrent 3.1.3", <UTorrent key="u" />]],
  [["18_вариант_...", <BlackBook key="b1" />], ["Вариант_9", <BlackBook key="b2" />]],
  [["Документ M...", <Word key="w1" />], ["Курсовой_9....", <Word key="w2" />]],
  [["Решение си...", <Firefox key="f" />]],
  [["Схема18_по...", <NiMark key="n" />, true]],
];

const tray: [string, React.ReactNode][] = [
  ["Питание", <svg key="1" width="16" height="16" viewBox="0 0 16 16"><path d="M1 3h7v12H1zM3 1h3v2H3z" fill="#1c2d30" /><path d="M10 6h5v3l-2 2v4h-1v-4l-2-2zM11 2v4M14 2v4" fill="#1c2d30" stroke="#1c2d30" /></svg>],
  ["Монитор", <svg key="2" width="16" height="16" viewBox="0 0 16 16"><path d="M0 0h16v16H0z" fill="#eee" /><path d="M1 11h14v4H1z" fill="#f02010" /><path d="M2 12V9h2V6h2v3h1V5h2v4h2V3h2v6h1v3z" fill="#10e020" /></svg>],
  ["Skype", <svg key="3" width="16" height="16" viewBox="0 0 16 16"><circle cx="5" cy="5" r="4.500" fill="#9bd42c" /><circle cx="11" cy="11" r="4.500" fill="#8ccc20" /><circle cx="8" cy="8" r="6.500" fill="#93d026" /><path d="M4.500 8l3 3 4.500-5" fill="none" stroke="#fff" strokeWidth="2.200" /></svg>],
  ["µTorrent", <UTorrent key="4" />],
  ["Download Master", <svg key="5" width="16" height="16" viewBox="0 0 16 16"><circle cx="8" cy="7" r="6" fill="#4fa0dc" /><path d="M0 8c0-4 3-6 6-6v3C4 5 3 6 3 9z" fill="#e03030" /><path d="M1 12c3 3 6 3 8 1L8 9l8 1-6 6v-2c-3 2-8 1-9-2z" fill="#27b52c" /><path d="M8 2c3 0 5 2 5 4l-3 1z" fill="#f4e040" /></svg>],
  ["Avast", <Round key="6" fill="#2c5f94"><text x="5" y="12" fontSize="12" fill="#fff" {...glyph}>a</text></Round>],
  ["Firewall", <Round key="7" fill="#2a5ba0"><text x="6" y="13" fontSize="12" fill="#fff" {...glyph}>f</text></Round>],
  ["Защита", <svg key="8" width="16" height="16" viewBox="0 0 16 16"><path d="M1 2l7-1 7 1c0 7-2 11-7 13C3 13 1 9 1 2z" fill="#fff" /><path d="M2 3l6-1v6H3C2 6 2 5 2 3zM8 8h5c-1 3-3 5-5 6z" fill="#e04020" /></svg>],
  ["Сеть", <svg key="9" width="16" height="16" viewBox="0 0 16 16"><path d="M4 5h11v8H4zM6 14h8v1H6z" fill="#16282c" stroke="#3c5a5e" /><path d="M1 1v4h3V1M2.500 5v4" stroke="#16282c" fill="none" strokeWidth="1.500" /></svg>],
  ["Громкость", <svg key="10" width="16" height="16" viewBox="0 0 16 16"><path d="M1 6h3l4-4v12l-4-4H1z" fill="#16282c" stroke="#5c7a7e" /><path d="M10 5c1.500 2 1.500 4 0 6M12 3c3 3 3 7 0 10" fill="none" stroke="#16282c" strokeWidth="1.300" /></svg>],
];

const menu: [string, string, string][] = [
  ["", "Ф", "айл"], ["", "Р", "едактор"], ["Ви", "д", ""], ["", "В", "ставить"], ["Ми", "к", "роконтроллеры"], ["", "М", "оделирование"],
  ["", "Т", "рансляция"], ["Инструм", "е", "нтарий"], ["", "О", "тчеты"], ["", "У", "становки"], ["", "О", "кно"], ["", "С", "правка"],
];

const Tools = ({ names, pressed = [] }: { names: string[]; pressed?: string[] }) => (
  <>
    {names.map((n) => (
      <Tool key={n} aria-label={n} $pressed={pressed.includes(n)}>
        <Ico n={n} />
      </Tool>
    ))}
  </>
);

const CloseX = ({ s = 9 }: { s?: number }) => (
  <svg width={s} height={s} viewBox="0 0 9 9" aria-hidden="true">
    <path d="M1 1l7 7M8 1L1 8" stroke="#000" strokeWidth="2" />
  </svg>
);

const outTabs: [string, number, boolean?][] = [
  ["Результаты", 71], ["Цепи", 40], ["Компоненты", 73], ["Проводящий слой", 100], ["Моделирование", 95, true],
];

export default function App() {
  return (
    <>
      <Global />
      <Screen>
        <TitleBar>
          <TitleIcon><NiMark /></TitleIcon>
          <TitleText>Схема18_пост_расчет - Multisim - [Схема18_пост_расчет *]</TitleText>
          <Caption>
            <CaptionButton $w={29} aria-label="Свернуть">
              <svg width="13" height="12" viewBox="0 0 13 12"><rect x="1" y="6" width="11" height="4" rx="1" fill="#fff" stroke="#445" /></svg>
            </CaptionButton>
            <CaptionButton $w={27} aria-label="Восстановить">
              <svg width="13" height="12" viewBox="0 0 13 12" fill="none"><path d="M4 1h8v8H9V4H4z" fill="#fff" stroke="#445" /><path d="M1 4h8v7H1z" fill="#fff" stroke="#445" /><path d="M4 6.500h2v2H4z" fill="#5a8c8e" stroke="#445" /></svg>
            </CaptionButton>
            <CaptionButton $w={46} $close aria-label="Закрыть">
              <svg width="13" height="12" viewBox="0 0 13 12"><path d="M2 1h3l1.500 2L8 1h3L8.500 6l2.500 5H8L6.500 8.500 5 11H2l2.500-5z" fill="#fff" stroke="#445" /></svg>
            </CaptionButton>
          </Caption>
        </TitleBar>

        <MenuBar>
          <DocSchem />
          {menu.map(([a, u, b], i) => (
            <MenuItem key={i}>{a}<u>{u}</u>{b}</MenuItem>
          ))}
          <MdiButtons>
            <SmallButton aria-label="Свернуть окно"><Pix w={9} h={9}><path d="M1 7h6" strokeWidth="2" /></Pix></SmallButton>
            <SmallButton aria-label="Восстановить окно"><Pix w={10} h={9}><path d="M3 1h6v4M3.500 1v2M8 5.500h1M1 4h5.500v4.500h-5.500z" /><path d="M3 1h7M1 4h6" strokeWidth="2" /></Pix></SmallButton>
            <SmallButton aria-label="Закрыть окно"><CloseX /></SmallButton>
          </MdiButtons>
        </MenuBar>

        <BarRow>
          <Band>
            <Tools names={["new", "open", "openBlue", "save", "print", "preview", "cut", "copy", "paste", "undo", "redo"]} />
          </Band>
          <Band $left={11}>
            <Tools names={["sheet", "zoomIn", "zoomOut", "zoomArea", "zoomFit"]} />
          </Band>
          <Band $left={9} $right={2}>
            <Tools names={["find", "panel", "tree", "grid", "db", "wizard", "graph"]} pressed={["tree", "grid"]} />
            <DropTool aria-label="Графики"><SmallDrop /></DropTool>
            <Tools names={["calc", "check", "marquee", "linkGray", "backGray", "forward"]} />
            <DropTool aria-label="Аннотация"><SmallDrop /></DropTool>
            <PickerWrap>
              <Picker aria-label="Состав" defaultValue="s"><option value="s">--- Состав ---</option></Picker>
              <PickerArrow><Tri /></PickerArrow>
            </PickerWrap>
            <Tool aria-label="Справка">
              <Pix smooth><path d="M4 6V4c0-3 8-3 8 0 0 3-4 3-4 6.500M8 12.500v3" stroke="#000080" strokeWidth="2.600" /></Pix>
            </Tool>
          </Band>
          <Push>
            <Band $left={12} $right={0}>
              <SwitchButton aria-label="Выключатель">
                <Pix w={30} h={14}>
                  <path d="M0 0h30v14H0z" fill="#a0a0a0" stroke="none" />
                  <path d="M4 3l3-3v10l-3 3z" fill="#fff" stroke="none" />
                  <path d="M17 4h12v9H17z" fill="#f0f0f0" stroke="#fff" />
                  <path d="M22.500 6v5" stroke="#a0a0a0" />
                </Pix>
              </SwitchButton>
              <SwitchButton aria-label="Пауза">
                <Pix w={30} h={14}>
                  <path d="M0 0h30v14H0z" fill="#a0a0a0" stroke="none" />
                  <path d="M1 2.500h29M2.500 4v9.500h27V4" stroke="#fff" />
                  <path d="M3 4h26v9H3z" fill="#f0f0f0" stroke="none" />
                  <path d="M14 5v7M18 5v7" stroke="#a0a0a0" strokeWidth="2" />
                </Pix>
              </SwitchButton>
            </Band>
          </Push>
        </BarRow>

        <BarRow>
          <Band>
            <Tools names={["ground", "resistor", "diode", "npn", "opamp", "ttl", "cmos", "digital", "mixed", "indicator", "power", "misc", "periph", "rf", "motor", "ni"]} />
            <BarLine />
            <Tools names={["mcu"]} />
            <BarLine />
            <Tools names={["hier", "bus"]} />
          </Band>
          <Band $left={11}>
            {blueIcons.map(([n, d]) => (
              <React.Fragment key={n}>
                <Tool aria-label={n}><BlueBox>{d}</BlueBox></Tool>
                <DropTool aria-label={`${n}: список`}><SmallDrop /></DropTool>
              </React.Fragment>
            ))}
          </Band>
        </BarRow>

        <SimRow>
          <Band>
            <Tools names={["play", "pause", "stop", "rec", "stepIn", "stepOver", "stepOut", "runTo", "hand", "hand2"]} pressed={["play"]} />
          </Band>
        </SimRow>

        <Workspace>
          <LeftDock>
            <DockHead>
              <DockTitle>Панель разработки</DockTitle>
              <SmallButton $w={14} $flat aria-label="Свернуть панель"><Tri dir="up" color="#909090" /></SmallButton>
              <SmallButton $w={14} $flat aria-label="Закрыть панель"><CloseX s={8} /></SmallButton>
            </DockHead>
            <DockFrame>
              <DockTools>
                {["docYellow", "open", "save", "rename", "text"].map((n) => (
                  <DockTool key={n} aria-label={n}><Ico n={n} /></DockTool>
                ))}
              </DockTools>
              <TreeBox>
                <Tree>
                  <TreeItem><span>Схема18</span></TreeItem>
                  <TreeItem $leaf><LeafDoc /><span>Схема18</span></TreeItem>
                  <TreeItem><span>Схема18_пост_расчет</span></TreeItem>
                  <TreeItem $leaf $on><LeafDoc /><span>Схема18_пост_расчет</span></TreeItem>
                </Tree>
                <HScroll>
                  <Tri dir="left" />
                  <HThumb><Pix w={8} h={7}><path d="M.5 0v7M3.500 0v7M6.500 0v7" stroke="#555" /></Pix></HThumb>
                  <Tri dir="right" />
                </HScroll>
              </TreeBox>
            </DockFrame>
            <DockTabs>
              <DockTab $on $w={70}>Структура</DockTab>
              <DockTab $w={40}>Отобра</DockTab>
              <DockNav>
                <SmallButton $flat aria-label="Влево"><Tri dir="left" color="#6070b0" /></SmallButton>
                <SmallButton $flat aria-label="Вправо"><Tri dir="right" color="#6070b0" /></SmallButton>
              </DockNav>
            </DockTabs>
          </LeftDock>

          <Mdi>
            <MdiFrame>
              <Sheet><Circuit /></Sheet>
              <VScroll>
                <Tri dir="up" color="#404040" />
                <VThumb><Pix w={7} h={8}><path d="M0 .5h7M0 3.500h7M0 6.500h7" stroke="#555" /></Pix></VThumb>
                <VTrack />
                <Tri color="#404040" />
              </VScroll>
            </MdiFrame>
            <SheetTabs>
              <SheetTab><DocSchem />Схема18 *</SheetTab>
              <SheetTab $on><DocSchem />Схема18_пост_расчет *</SheetTab>
              <SheetNav>
                <SmallButton aria-label="Предыдущий лист"><Tri dir="left" color="#000080" /></SmallButton>
                <SmallButton aria-label="Следующий лист"><Tri dir="right" color="#000080" /></SmallButton>
              </SheetNav>
            </SheetTabs>
          </Mdi>

          <Instruments>
            {instruments.map(([n, d]) => <Instrument key={n} aria-label={n}>{d}</Instrument>)}
            <InstLine />
            <Instrument aria-label="Пробник">
              <Pix>
                <path d="M1 1h6L5 3l3 3h5l2 2v4l-2 2H4l-2-2V8l1-2-1-2z" fill="#fff200" stroke="#b0a000" />
                <text x="1" y="13" fontSize="7" fill="#000" {...glyph}>1.4v</text>
              </Pix>
            </Instrument>
            <Instrument $h={11} aria-label="Пробники"><Tri dir="right" /></Instrument>
            <Instrument $h={24} aria-label="LabVIEW">
              <Pix>
                <path d="M2 2h12v12H2z" fill="#003c3c" />
                <path d="M1 1.500h14M1 14.500h14" stroke="#555" strokeDasharray="1 1" />
                <path d="M0 5h4M13 8h3" stroke="#f00" strokeWidth="2" />
                <path d="M0 11h4" stroke="#00f" strokeWidth="2" />
                <path d="M5 3v10l7-5z" fill="#ffe600" />
              </Pix>
            </Instrument>
            <Instrument $h={11} aria-label="Приборы LabVIEW"><Tri dir="right" /></Instrument>
            <InstLine />
            <Instrument $h={26} aria-label="Токовый пробник">
              <Pix smooth>
                <path d="M1 9l6-6 8 4-5 7-4-1z" fill="#fff" stroke="#888" strokeDasharray="1 1" />
                <path d="M3 8l3 3M11 6l-2-1M10 11l2-3" stroke="#0a5a50" strokeWidth="2" />
              </Pix>
            </Instrument>
            <InstLine />
            <Instrument $h={14} aria-label="Ещё">
              <Pix w={9} h={9} smooth><path d="M1 0l3.500 3L8 0M1 5l3.500 3L8 5" strokeWidth="1.600" /></Pix>
            </Instrument>
          </Instruments>
        </Workspace>

        <Output>
          <OutSide>
            <SmallButton $w={14} aria-label="Закрыть блоки"><CloseX s={8} /></SmallButton>
            <SmallButton $w={14} $flat aria-label="Развернуть блоки"><Tri dir="right" color="#a0a0a0" /></SmallButton>
            <SideLabel>Блоки</SideLabel>
          </OutSide>
          <OutBody>
            <OutFrame>
              <OutText>
                <Lines>
                  <p>------ Проверка перечня соединений SPICE для Схема18 - 10 июня 2012 г., 22:42:55 ------</p>
                  <p>{"Перечень соединений SPICE имеет ошибку в обозначении '', элемент 'vresr2':  Двойник названия модели 'vresr2'"}</p>
                </Lines>
                <OutScroll><Tri dir="up" color="#404040" /><Tri color="#404040" /></OutScroll>
              </OutText>
            </OutFrame>
            <OutTabs>
              {outTabs.map(([t, w, on]) => <OutTab key={t} $w={w} $on={on}>{t}</OutTab>)}
            </OutTabs>
          </OutBody>
        </Output>

        <TaskBar>
          <StartButton aria-label="Пуск"><StartOrb /></StartButton>
          {tasks.map((group, i) => (
            <TaskGroup key={i}>
              {group.map(([t, icon, on]) => (
                <Task key={t} $on={on}>{icon}<span>{t}</span></Task>
              ))}
            </TaskGroup>
          ))}
          <Tray>
            <Lang>RU</Lang>
            <Tri dir="up" color="#fff" />
            {tray.map(([n, d]) => <span key={n} title={n}>{d}</span>)}
            <Clock>22:50</Clock>
          </Tray>
          <ShowDesktop aria-label="Показать рабочий стол" />
        </TaskBar>
      </Screen>
    </>
  );
}
